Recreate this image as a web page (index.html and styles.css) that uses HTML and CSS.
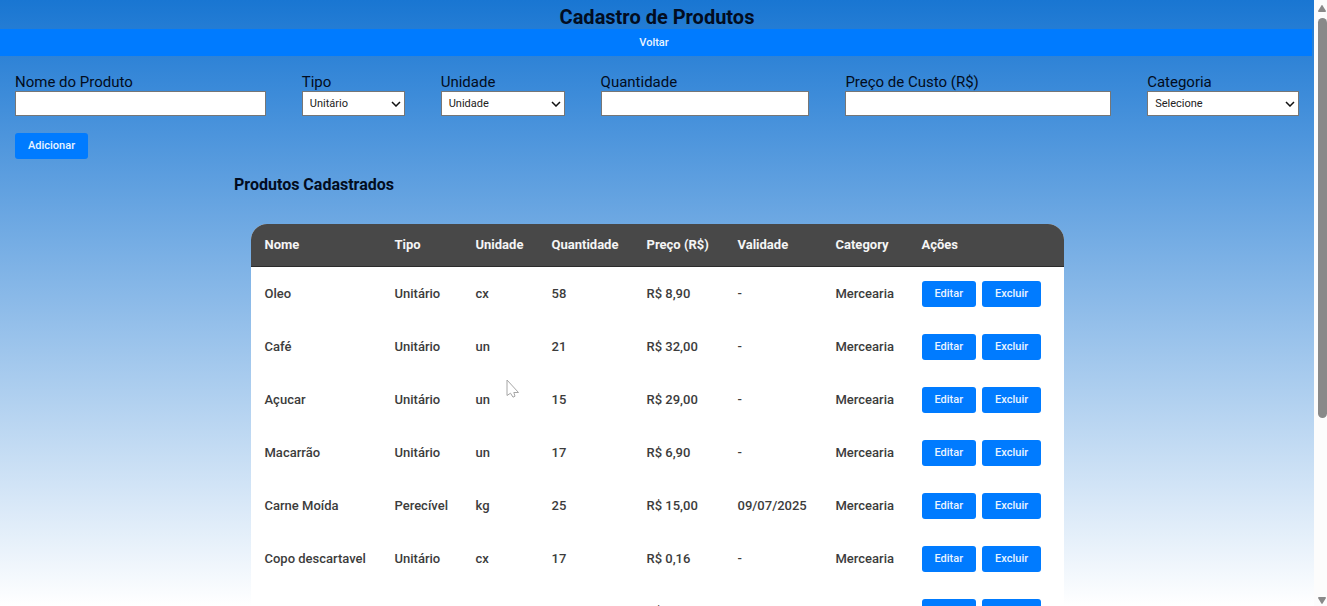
FILE: index.html
```
<!DOCTYPE html>
<html lang="pt-BR">
<head>
<meta charset="utf-8">
<title>Cadastro de Produtos</title>
<link rel="stylesheet" href="styles.css">
</head>
<body>
<div class="window">
  <main class="page">
    <h1 class="title">Cadastro de Produtos</h1>
    <button class="back" type="button">Voltar</button>
    <form class="form">
      <div class="fields">
        <div class="field"><label for="nome">Nome do Produto</label><input class="control" id="nome" type="text"></div>
        <div class="field"><label for="tipo">Tipo</label><select class="control select" id="tipo"><option>Unitário</option><option>Perecível</option></select></div>
        <div class="field"><label for="unidade">Unidade</label><select class="control select" id="unidade"><option>Unidade</option></select></div>
        <div class="field"><label for="quantidade">Quantidade</label><input class="control" id="quantidade" type="text"></div>
        <div class="field"><label for="preco">Preço de Custo (R$)</label><input class="control" id="preco" type="text"></div>
        <div class="field"><label for="categoria">Categoria</label><select class="control select" id="categoria"><option>Selecione</option></select></div>
      </div>
      <button class="button" type="button">Adicionar</button>
    </form>
    <section class="products">
      <h2 class="subtitle">Produtos Cadastrados</h2>
      <table class="table">
        <colgroup><col class="c-name"><col class="c-type"><col class="c-unit"><col class="c-qty"><col class="c-price"><col class="c-date"><col class="c-cat"><col></colgroup>
        <thead>
          <tr><th>Nome</th><th>Tipo</th><th>Unidade</th><th>Quantidade</th><th>Preço (R$)</th><th>Validade</th><th>Category</th><th>Ações</th></tr>
        </thead>
        <tbody>
          <tr><td>Oleo</td><td>Unitário</td><td>cx</td><td>58</td><td>R$ 8,90</td><td>-</td><td>Mercearia</td><td><div class="actions"><button class="button" type="button">Editar</button><button class="button" type="button">Excluir</button></div></td></tr>
          <tr><td>Café</td><td>Unitário</td><td>un</td><td>21</td><td>R$ 32,00</td><td>-</td><td>Mercearia</td><td><div class="actions"><button class="button" type="button">Editar</button><button class="button" type="button">Excluir</button></div></td></tr>
          <tr><td>Açucar</td><td>Unitário</td><td>un</td><td>15</td><td>R$ 29,00</td><td>-</td><td>Mercearia</td><td><div class="actions"><button class="button" type="button">Editar</button><button class="button" type="button">Excluir</button></div></td></tr>
          <tr><td>Macarrão</td><td>Unitário</td><td>un</td><td>17</td><td>R$ 6,90</td><td>-</td><td>Mercearia</td><td><div class="actions"><button class="button" type="button">Editar</button><button class="button" type="button">Excluir</button></div></td></tr>
          <tr><td>Carne Moída</td><td>Perecível</td><td>kg</td><td>25</td><td>R$ 15,00</td><td>09/07/2025</td><td>Mercearia</td><td><div class="actions"><button class="button" type="button">Editar</button><button class="button" type="button">Excluir</button></div></td></tr>
          <tr><td>Copo descartavel</td><td>Unitário</td><td>cx</td><td>17</td><td>R$ 0,16</td><td>-</td><td>Mercearia</td><td><div class="actions"><button class="button" type="button">Editar</button><button class="button" type="button">Excluir</button></div></td></tr>
          <tr><td></td><td></td><td></td><td></td><td>R$</td><td></td><td></td><td><div class="actions"><button class="button" type="button">Editar</button><button class="button" type="button">Excluir</button></div></td></tr>
        </tbody>
      </table>
    </section>
  </main>
  <div class="scrollbar" aria-hidden="true">
    <svg width="10" height="8" viewBox="0 0 10 8"><path d="M1 7 4.4 1.4Q5 .6 5.6 1.4L9 7Q9 8 8 8H2Q1 8 1 7Z" fill="#898989"/></svg>
    <div class="track"><div class="thumb"></div></div>
    <svg width="10" height="8" viewBox="0 0 10 8"><path d="M1 1 4.4 6.6Q5 7.4 5.6 6.6L9 1Q9 0 8 0H2Q1 0 1 1Z" fill="#898989"/></svg>
  </div>
</div>
<svg class="cursor" width="14" height="20" viewBox="0 0 14 20" aria-hidden="true"><path d="M1 1V16.5L4.5 14.2 7 18.2 9 17.2 7.8 13.5H12.5Z" fill="#fff" stroke="#a6a6a6"/></svg>
</body>
</html>
```
FILE: styles.css
```
* { box-sizing: border-box; }

body {
  margin: 0;
  font-family: Roboto, "Liberation Sans", sans-serif;
  color: #020c20;
}

.window {
  display: flex;
  height: 100vh;
  overflow: hidden;
}

.page {
  flex: 1;
  min-width: 0;
  overflow: hidden;
  background: linear-gradient(#1976d2, #fff);
}

.title {
  margin: 0;
  padding-top: 5px;
  font-size: 20px;
  line-height: 24px;
  font-weight: 700;
  text-align: center;
}

.back,
.button {
  border: 0;
  background: #007bff;
  color: #e9f4ff;
  font-family: inherit;
  font-size: 11px;
  line-height: 14px;
  font-weight: 500;
  padding: 6px 13px;
}

.back {
  display: block;
  width: calc(100% - 2px);
  height: 27px;
  padding-right: 17px;
}

.button {
  border-radius: 3px;
  height: 26px;
}

.form { padding: 17px 15px 0; }

.fields {
  display: grid;
  grid-template-columns: 251fr 103fr 124fr 209fr 266fr 152fr;
  gap: 36px;
  margin-bottom: 17px;
}

.field {
  display: flex;
  flex-direction: column;
  min-width: 0;
}

.field label {
  font-size: 15px;
  line-height: 18px;
}

.control {
  width: 100%;
  height: 25px;
  border: 1px solid #767676;
  border-radius: 0;
  background-color: #fff;
  color: #222;
  font-family: inherit;
  font-size: 11px;
  padding: 0 7px;
}

.select {
  appearance: none;
  background-image: url("data:image/svg+xml,%3Csvg xmlns='http://www.w3.org/2000/svg' width='10' height='6' viewBox='0 0 10 6'%3E%3Cpath d='M1 1l4 4 4-4' fill='none' stroke='%23111' stroke-width='1.5'/%3E%3C/svg%3E");
  background-repeat: no-repeat;
  background-position: right 3px center;
}

.products {
  width: 846px;
  margin: 0 auto;
}

.subtitle {
  margin: 0;
  padding: 16px 0 29px;
  font-size: 16px;
  line-height: 20px;
  font-weight: 700;
}

.table {
  width: 813px;
  margin: 0 auto;
  table-layout: fixed;
  border-collapse: separate;
  border-spacing: 0;
  border-radius: 16px 16px 0 0;
  overflow: hidden;
  background: #fff;
  color: #3c3c3c;
  font-size: 13px;
  line-height: 16px;
  font-weight: 500;
  text-align: left;
}

.table th {
  height: 43px;
  padding: 0 0 0 14px;
  background: #484848;
  border-bottom: 1px solid #2b2b2b;
  color: #f5f5f5;
  font-weight: 700;
}

.table td {
  height: 53px;
  padding: 0 0 0 14px;
}

.c-name { width: 130px; }
.c-type { width: 81px; }
.c-unit { width: 76px; }
.c-qty { width: 95px; }
.c-price { width: 91px; }
.c-date { width: 98px; }
.c-cat { width: 86px; }

.actions {
  display: flex;
  gap: 6px;
}

.scrollbar {
  display: flex;
  flex-direction: column;
  align-items: flex-end;
  width: 13px;
  padding: 4px 0 1px;
  background: #fcfcfc;
}

.track {
  flex: 1;
  width: 9px;
  padding-top: 6px;
}

.thumb {
  height: 69%;
  border-radius: 5px;
  background: #898989;
}

.cursor {
  position: absolute;
  left: 506px;
  top: 379px;
}
```
